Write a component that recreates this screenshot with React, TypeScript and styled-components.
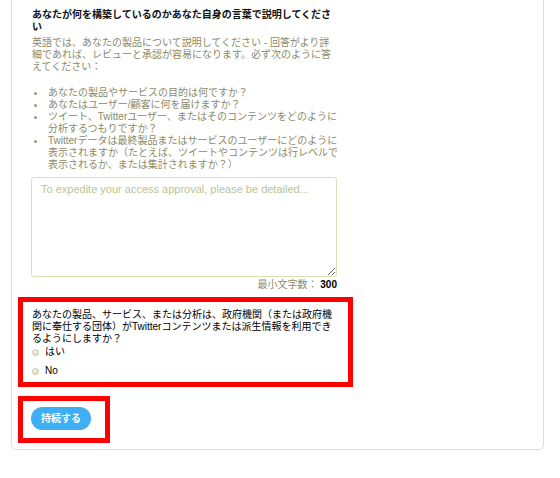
import React from "react";
import styled, { createGlobalStyle } from "styled-components";

const Global = createGlobalStyle`
  html, body { margin: 0; padding: 0; background: #ffffff; }
  body {
    font-family: "Liberation Sans", "Noto Sans CJK JP", sans-serif;
    font-size: 10px;
    line-height: 12px;
    color: #000;
  }
`;

const Panel = styled.div`
  box-sizing: border-box;
  margin-left: 11px;
  width: 533px;
  border: 1px solid #dfe4bd;
  border-top: none;
  border-radius: 0 0 5px 5px;
  padding: 9px 6px 6px 6px;
`;

const Section = styled.div`
  padding-left: 14px;
  width: 305px;
  white-space: nowrap;
`;

const Title = styled.div`
  font-weight: bold;
  color: #111;
`;

const Desc = styled.div`
  margin-top: 4px;
  color: #8a8a68;
`;

const List = styled.ul`
  list-style: none;
  margin: 14px 0 0 0;
  padding: 0;
  color: #8a8a68;
`;

const Item = styled.li`
  position: relative;
  padding-left: 16px;
  &::before {
    content: "";
    position: absolute;
    left: 2px;
    top: 5px;
    width: 3px;
    height: 3px;
    border-radius: 50%;
    background: #9a9a80;
  }
`;

const TextArea = styled.textarea`
  display: block;
  box-sizing: border-box;
  margin: 6px 0 0 -1px;
  width: 306px;
  height: 100px;
  border: 1px solid #dadfb4;
  border-radius: 3px;
  padding: 5px 9px;
  font-family: "Liberation Sans", sans-serif;
  font-size: 11px;
  line-height: 13px;
  color: #333;
  outline: none;
  &::placeholder {
    color: #b9c495;
  }
`;

const MinChars = styled.div`
  margin-top: 2px;
  text-align: right;
  color: #8a8a68;
  b {
    color: #000;
    font-weight: bold;
  }
`;

const Marked = styled.div<{ $w: number }>`
  box-sizing: border-box;
  width: ${(p) => p.$w}px;
  border: 5px solid #ff0000;
`;

const QuestionBox = styled(Marked)`
  margin-top: 6px;
  padding: 7px 9px 5px 9px;
  white-space: nowrap;
`;

const ButtonBox = styled(Marked)`
  margin-top: 9px;
  padding: 6px 8px 8px 8px;
`;

const Question = styled.div`
  color: #000;
`;

const RadioRow = styled.label<{ $first?: boolean }>`
  display: flex;
  align-items: center;
  gap: 6px;
  margin-top: ${(p) => (p.$first ? 1 : 7)}px;
  color: #000;
`;

const Radio = styled.span`
  display: inline-block;
  box-sizing: border-box;
  width: 7px;
  height: 7px;
  border-radius: 50%;
  border: 1px solid #c9c9a8;
  background: radial-gradient(circle at 40% 35%, #f4f4e6, #d6d6bc);
`;

const Button = styled.button`
  display: block;
  width: 60px;
  height: 23px;
  border: none;
  border-radius: 12px;
  background: #3daff2;
  color: #fff;
  font-family: "Liberation Sans", "Noto Sans CJK JP", sans-serif;
  font-weight: bold;
  font-size: 10px;
  line-height: 23px;
  padding: 0;
  cursor: pointer;
`;

export default function App() {
  return (
    <>
      <Global />
      <Panel>
        <Section>
          <Title>
            あなたが何を構築しているのかあなた自身の言葉で説明してくださ
            <br />い
          </Title>
          <Desc>
            英語では、あなたの製品について説明してください - 回答がより詳
            <br />
            細であれば、レビューと承認が容易になります。必ず次のように答
            <br />
            えてください：
          </Desc>
          <List>
            <Item>あなたの製品やサービスの目的は何ですか？</Item>
            <Item>あなたはユーザー/顧客に何を届けますか？</Item>
            <Item>
              ツイート、Twitterユーザー、またはそのコンテンツをどのように
              <br />
              分析するつもりですか？
            </Item>
            <Item>
              Twitterデータは最終製品またはサービスのユーザーにどのように
              <br />
              表示されますか（たとえば、ツイートやコンテンツは行レベルで
              <br />
              表示されるか、または集計されますか？）
            </Item>
          </List>
          <TextArea placeholder="To expedite your access approval, please be detailed..." />
          <MinChars>
            最小文字数： <b>300</b>
          </MinChars>
        </Section>
        <QuestionBox $w={335}>
          <Question>
            あなたの製品、サービス、または分析は、政府機関（または政府機
            <br />
            関に奉仕する団体）がTwitterコンテンツまたは派生情報を利用でき
            <br />
            るようにしますか？
          </Question>
          <RadioRow $first>
            <Radio />
            はい
          </RadioRow>
          <RadioRow>
            <Radio />
            No
          </RadioRow>
        </QuestionBox>
        <ButtonBox $w={92}>
          <Button>持続する</Button>
        </ButtonBox>
      </Panel>
    </>
  );
}
